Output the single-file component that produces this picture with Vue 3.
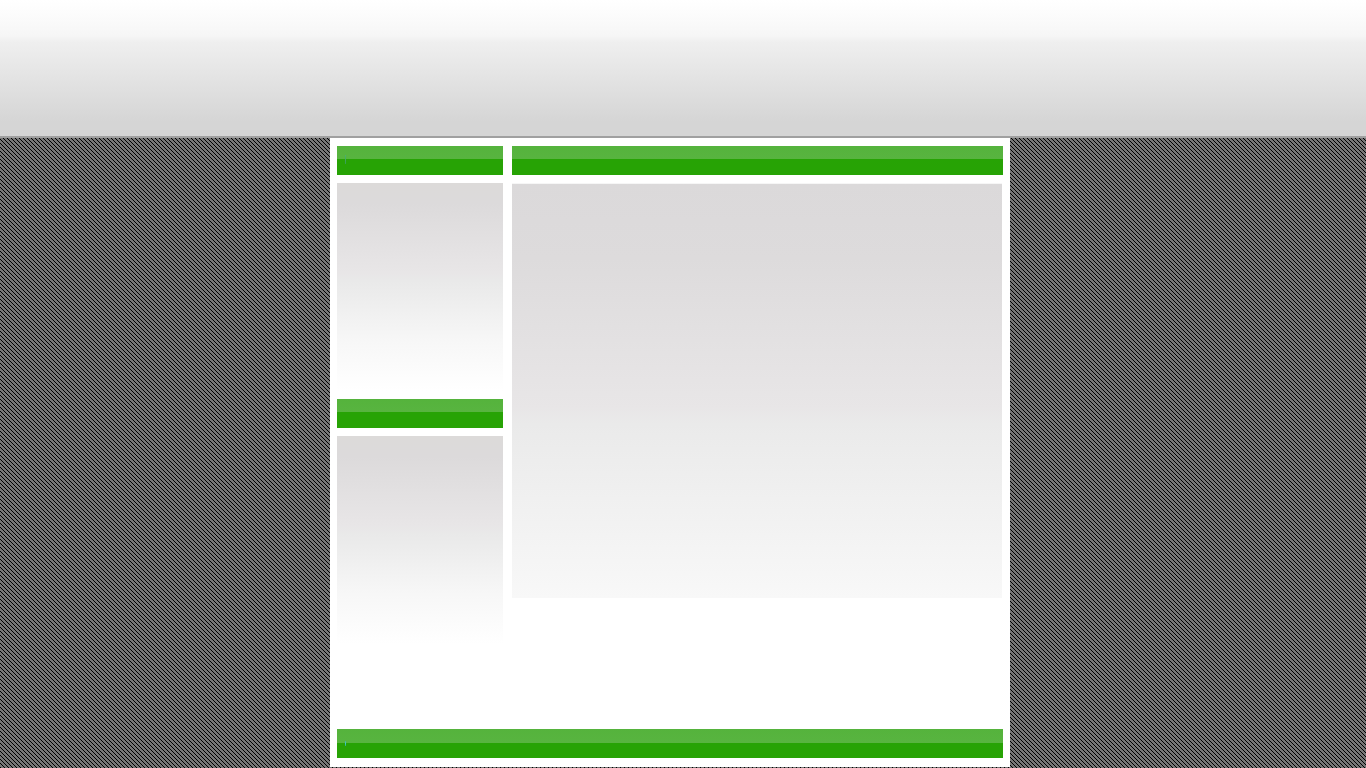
<script setup>
const sideBlocks = [
  { id: 'first', mark: true },
  { id: 'second', mark: false },
]
</script>

<template>
  <div class="page">
    <header class="banner"></header>
    <div class="stage">
      <div class="sheet">
        <div class="columns">
          <aside class="side">
            <section v-for="block in sideBlocks" :key="block.id" class="block">
              <div class="bar"><span v-if="block.mark" class="mark"></span></div>
              <div class="panel"></div>
            </section>
          </aside>
          <main class="content">
            <div class="bar"></div>
            <div class="article"></div>
          </main>
        </div>
        <footer class="bar bottom"><span class="mark bright"></span></footer>
      </div>
    </div>
  </div>
</template>

<style>
body {
  margin: 0;
  background: #777777 url("data:image/svg+xml,%3Csvg xmlns='http://www.w3.org/2000/svg' width='4' height='4' shape-rendering='crispEdges'%3E%3Cpath d='M1 0h1v1h-1zM2 1h1v1h-1zM3 2h1v1h-1zM0 3h1v1h-1z'/%3E%3C/svg%3E");
}
</style>

<style scoped>
.page {
  box-sizing: border-box;
  display: flex;
  flex-direction: column;
  min-height: 100vh;
  padding-bottom: 1px;
  font-family: "Liberation Sans", Arial, sans-serif;
}
.banner {
  height: 136px;
  border-bottom: 2px solid #a0a0a0;
  background: linear-gradient(#ffffff 0, #fcfcfc 14px, #f6f6f6 36px, #efefef 42px, #d5d5d5 122px, #d5d5d5);
}
.stage {
  flex: 1;
  display: flex;
  justify-content: center;
  padding-right: 26px;
}
.sheet {
  box-sizing: border-box;
  display: flex;
  flex-direction: column;
  justify-content: space-between;
  width: 100%;
  max-width: 680px;
  padding: 8px 7px 9px;
  background: #ffffff;
}
.columns {
  display: flex;
  gap: 9px;
}
.side {
  flex: 0 0 166px;
}
.content {
  flex: 1;
}
.bar {
  box-sizing: border-box;
  height: 29px;
  padding: 9px 8px 0;
  background: linear-gradient(#55b33c 0, #58b440 13px, #27a305 13px, #27a305);
}
.bottom {
  padding-top: 12px;
  background: linear-gradient(#55b33c 0, #58b440 14px, #27a305 14px, #27a305);
}
.mark {
  display: block;
  width: 1px;
  height: 9px;
  background: linear-gradient(#4db070, #33a050);
}
.bright {
  height: 5px;
  background: linear-gradient(#40b890, #40c8d0, #30b080);
}
.block {
  padding-bottom: 8px;
}
.panel {
  height: 208px;
  margin-top: 8px;
  background: linear-gradient(#dcdad9 0, #dcdadb 10%, #e8e6e7 43%, #e9e9e9 47%, #f7f7f7 76%, #ffffff);
}
.article {
  height: 414px;
  margin: 8px 1px 0 0;
  border-top: 1px solid #f6f6f6;
  background: linear-gradient(#dbd9da 0, #dddbdc 18%, #e8e6e7 54%, #eaeaea 58%, #f8f8f8);
}
</style>
